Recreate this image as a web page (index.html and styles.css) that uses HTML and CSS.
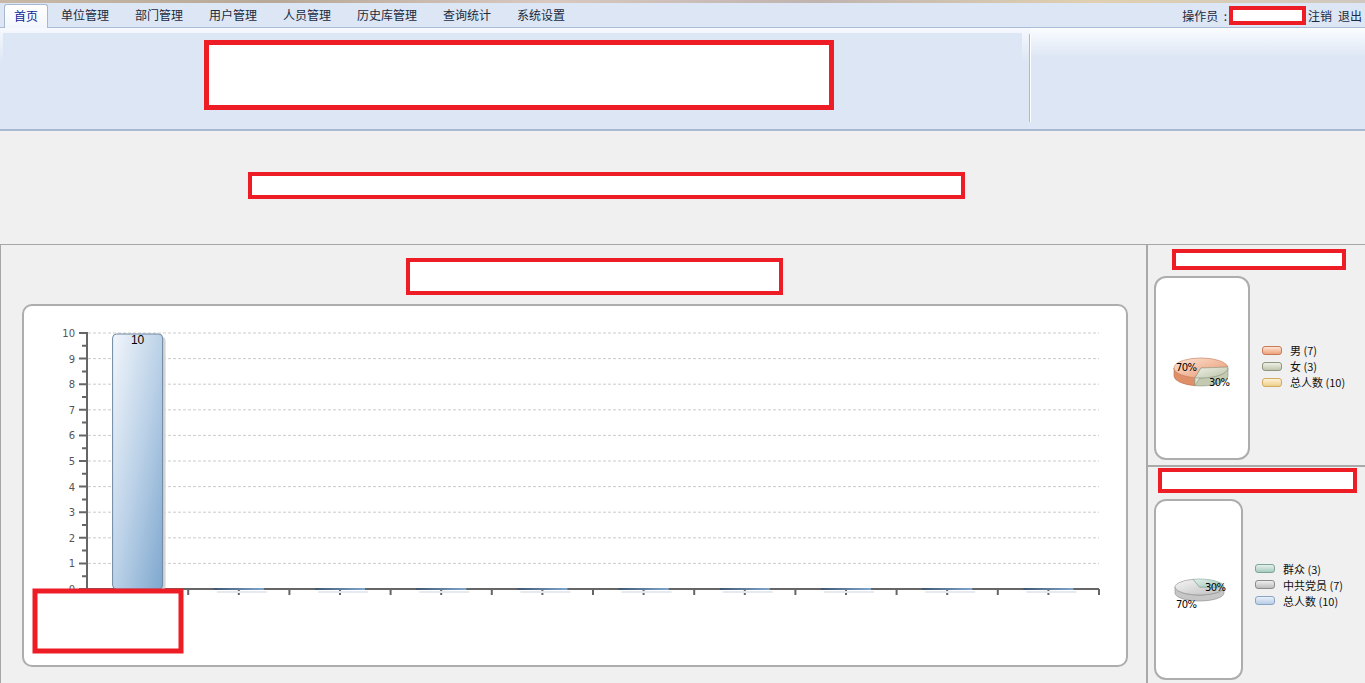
FILE: index.html
```html
<!DOCTYPE html>
<html lang="zh">
<head>
<meta charset="utf-8">
<title>首页</title>
<link rel="stylesheet" href="styles.css">
</head>
<body>
<div class="topstrip"></div>
<div class="menubar">
  <ul class="tabs">
    <li class="tab active">首页</li>
    <li class="tab">单位管理</li>
    <li class="tab">部门管理</li>
    <li class="tab">用户管理</li>
    <li class="tab">人员管理</li>
    <li class="tab">历史库管理</li>
    <li class="tab">查询统计</li>
    <li class="tab">系统设置</li>
  </ul>
  <div class="user">
    <span class="op">操作员&nbsp;&nbsp;:</span>
    <span class="redact redact-user"></span>
    <span class="link link-logout">注销</span>
    <span class="link link-exit">退出</span>
  </div>
</div>
<div class="banner">
  <div class="banner-left"><div class="redact redact-logo"></div></div>
  <div class="banner-sep"></div>
  <div class="banner-right"></div>
</div>
<div class="notice"><div class="redact redact-notice"></div></div>
<div class="main">
  <div class="left">
    <div class="redact redact-title"></div>
    <div class="chartbox">
      <svg class="chart" width="1105" height="362" viewBox="0 0 1105 362" xmlns="http://www.w3.org/2000/svg">
        <defs>
          <linearGradient id="barg" x1="0" y1="0" x2="1" y2="1">
            <stop offset="0" stop-color="#f2f6fb"/>
            <stop offset="0.5" stop-color="#bcd2e8"/>
            <stop offset="1" stop-color="#7ea7ce"/>
          </linearGradient>
          <linearGradient id="flatg" x1="0" y1="0" x2="1" y2="0">
            <stop offset="0" stop-color="#3f5770"/>
            <stop offset="1" stop-color="#7fa6cf"/>
          </linearGradient>
        </defs>
        <g id="grid" stroke="#cccccc" stroke-width="1" stroke-dasharray="3,2"></g>
        <g id="yaxis"></g>
        <g id="xaxis"></g>
        <g id="bars"></g>
        <rect x="12" y="287" width="146" height="60" fill="#ffffff" stroke="#ee1c24" stroke-width="5"/>
      </svg>
    </div>
  </div>
  <div class="right">
    <div class="sect sect1">
      <div class="redact redact-r1"></div>
      <div class="pierow">
        <div class="piebox pb1">
          <svg width="96" height="184" viewBox="0 0 96 184" xmlns="http://www.w3.org/2000/svg">
            <defs>
              <linearGradient id="or" x1="0" y1="0" x2="1" y2="1">
                <stop offset="0" stop-color="#fde6d8"/>
                <stop offset="1" stop-color="#e8946a"/>
              </linearGradient>
              <linearGradient id="gr" x1="0" y1="0" x2="1" y2="1">
                <stop offset="0" stop-color="#eef0e6"/>
                <stop offset="1" stop-color="#bcc3a8"/>
              </linearGradient>
            </defs>
            <path d="M40.9,101.7 A27,10 0 0,1 20,92 L20,100 A27,10 0 0,0 40.9,109.7 Z" fill="#e09068" stroke="#b87050" stroke-width="0.6"/>
            <path d="M74,92 A27,10 0 0,1 40.9,101.7 L40.9,109.7 A27,10 0 0,0 74,100 Z" fill="#c4cab2" stroke="#8e9680" stroke-width="0.6"/>
            <path d="M47,92 L40.9,101.7 L40.9,109.7 L47,100 Z" fill="#dde2cf" stroke="#8e9680" stroke-width="0.6"/>
            <path d="M47,92 L73.9,91.1 A27,10 0 1,0 40.9,101.7 Z" fill="url(#or)" stroke="#c07a56" stroke-width="0.6"/>
            <path d="M47,92 L73.9,91.1 A27,10 0 0,1 40.9,101.7 Z" fill="url(#gr)" stroke="#8e9680" stroke-width="0.6"/>
            <text x="22" y="95" class="pct">70%</text>
            <text x="55" y="110" class="pct">30%</text>
          </svg>
        </div>
        <ul class="legend lg1">
          <li><span class="sw sw-or"></span>男 (7)</li>
          <li><span class="sw sw-gr"></span>女 (3)</li>
          <li><span class="sw sw-ye"></span>总人数 (10)</li>
        </ul>
      </div>
    </div>
    <div class="sect sect2">
      <div class="redact redact-r2"></div>
      <div class="pierow">
        <div class="piebox pb2">
          <svg width="89" height="181" viewBox="0 0 89 181" xmlns="http://www.w3.org/2000/svg">
            <defs>
              <linearGradient id="gy" x1="0" y1="0" x2="1" y2="1">
                <stop offset="0" stop-color="#f6f6f6"/>
                <stop offset="1" stop-color="#bdbdbd"/>
              </linearGradient>
              <linearGradient id="tl" x1="0" y1="0" x2="1" y2="1">
                <stop offset="0" stop-color="#e4f0ec"/>
                <stop offset="1" stop-color="#9cc4b6"/>
              </linearGradient>
            </defs>
            <path d="M70,88 A24.5,8 0 0,1 21,88 L21,94 A24.5,8 0 0,0 70,94 Z" fill="#c6c6c6" stroke="#8c8c8c" stroke-width="0.6"/>
            <path d="M45.5,88 L70,88.4 A24.5,8 0 1,1 39.2,80.3 Z" fill="url(#gy)" stroke="#8c8c8c" stroke-width="0.6"/>
            <path d="M45.5,88 L39.2,80.3 A24.5,8 0 0,1 70,88.4 Z" fill="url(#tl)" stroke="#7fa898" stroke-width="0.6"/>
            <text x="51" y="92" class="pct">30%</text>
            <text x="22" y="109" class="pct">70%</text>
          </svg>
        </div>
        <ul class="legend lg2">
          <li><span class="sw sw-tl"></span>群众 (3)</li>
          <li><span class="sw sw-gy"></span>中共党员 (7)</li>
          <li><span class="sw sw-bl"></span>总人数 (10)</li>
        </ul>
      </div>
    </div>
  </div>
</div>
<script src="chart.js"></script>
</body>
</html>
```

FILE: chart.js
```js
(function () {
  var NS = "http://www.w3.org/2000/svg";
  function el(name, attrs, parent, text) {
    var e = document.createElementNS(NS, name);
    for (var k in attrs) e.setAttribute(k, attrs[k]);
    if (text !== undefined) e.textContent = text;
    parent.appendChild(e);
    return e;
  }
  var ax = 64, top = 29, bot = 285, right = 1076;
  var step = (bot - top) / 10;
  var grid = document.getElementById("grid");
  var yaxis = document.getElementById("yaxis");
  var bars = document.getElementById("bars");
  var xaxis = document.getElementById("xaxis");
  for (var i = 0; i <= 10; i++) {
    var y = bot - i * step;
    if (i > 0) el("line", { x1: ax + 1, y1: y, x2: right, y2: y }, grid);
    el("line", { x1: ax - 8, y1: y, x2: ax, y2: y, stroke: "#666", "stroke-width": 2 }, yaxis);
    if (i < 10) {
      var ym = y - step / 2;
      el("line", { x1: ax - 5, y1: ym, x2: ax, y2: ym, stroke: "#666", "stroke-width": 2 }, yaxis);
    }
    el("text", { x: 52, y: y + 4, "class": "ylab", "text-anchor": "end" }, yaxis, String(i));
  }
  el("line", { x1: ax, y1: top - 1, x2: ax, y2: bot + 1, stroke: "#666", "stroke-width": 2 }, yaxis);
  var tw = (right - ax) / 20;
  el("line", { x1: ax, y1: bot, x2: right, y2: bot, stroke: "#666", "stroke-width": 2 }, xaxis);
  for (var t = 1; t <= 20; t++) {
    var x = ax + t * tw;
    el("line", { x1: x, y1: bot, x2: x, y2: bot + 6, stroke: "#666", "stroke-width": 2 }, xaxis);
  }
  for (var c = 0; c < 10; c++) {
    var cx = ax + (2 * c + 1) * tw;
    if (c === 0) {
      el("rect", { x: cx - 22, y: top + 4, width: 50, height: bot - top - 3, rx: 4, fill: "#d4d4d4" }, bars);
      el("rect", { x: cx - 25, y: top + 1, width: 50, height: bot - top - 1, rx: 4, fill: "url(#barg)", stroke: "#6e87a3", "stroke-width": 1 }, bars);
      el("text", { x: cx, y: top + 11, "class": "blab", "text-anchor": "middle" }, bars, "10");
    } else {
      el("rect", { x: cx - 22, y: bot + 2, width: 50, height: 2, fill: "#e6e9ee" }, bars);
      el("rect", { x: cx - 25, y: bot - 1, width: 50, height: 2, fill: "url(#flatg)" }, bars);
    }
  }
})();
```

FILE: styles.css
```css
* { box-sizing: border-box; }
html, body { margin: 0; padding: 0; }
body {
  width: 1365px;
  height: 683px;
  overflow: hidden;
  background: #f0f0f0;
  font-family: "Noto Sans CJK SC", "Liberation Sans", sans-serif;
  font-size: 12px;
  color: #1a2a40;
}
ul { list-style: none; margin: 0; padding: 0; }

.redact {
  background: #ffffff;
  border: 5px solid #ee1c24;
}

.topstrip {
  height: 3px;
  background: linear-gradient(90deg, #c8b8a8, #b8a898 20%, #d8c8c0 40%, #c0b4b0 60%, #e0d0b0 80%, #d0c8c0);
}

.menubar {
  height: 25px;
  display: flex;
  justify-content: space-between;
  align-items: stretch;
  background: #dce6f4;
  border-bottom: 1px solid #aabcd6;
}
.tabs {
  display: flex;
  align-items: flex-end;
  padding-left: 4px;
}
.tab {
  height: 23px;
  line-height: 22px;
  padding: 0 13px;
  color: #1a2a40;
  white-space: nowrap;
}
.tab.active {
  background: linear-gradient(#ffffff, #f2f6fc);
  border: 1px solid #a8b8d0;
  border-bottom: none;
  border-radius: 3px 3px 0 0;
  color: #0f1f9a;
  padding: 0 9px;
  margin-right: 0;
  height: 24px;
  margin-bottom: -1px;
}
.user {
  display: flex;
  align-items: center;
  padding-right: 3px;
  white-space: nowrap;
}
.op { margin-right: 2px; }
.redact-user {
  width: 77px;
  height: 19px;
  border-width: 4px;
  margin-right: 2px;
}
.link-logout { margin-left: 0; }
.link-exit { margin-left: 6px; }

.banner {
  height: 103px;
  display: flex;
  background: linear-gradient(#f6f9fe, #dce6f4 35%);
  border-bottom: 2px solid #a9b9d2;
}
.banner-left {
  width: 1019px;
  height: 89px;
  margin: 5px 0 0 3px;
  background: #dce6f4;
  padding: 7px 0 0 201px;
}
.redact-logo {
  width: 630px;
  height: 70px;
  border-width: 5px;
}
.banner-sep {
  width: 2px;
  height: 88px;
  margin: 6px 0 0 7px;
  border-left: 1px solid #aeb9ca;
  border-right: 1px solid #ffffff;
}
.banner-right {
  flex: 1;
  background: linear-gradient(#fbfdff, #dce6f4 30px);
}

.notice {
  height: 113px;
  padding: 41px 0 0 248px;
}
.redact-notice {
  width: 717px;
  height: 27px;
  border-width: 4px;
}

.main {
  display: flex;
  height: 440px;
  border-top: 1px solid #a6a6a6;
}
.left {
  width: 1146px;
  border-left: 1px solid #a6a6a6;
  padding-top: 13px;
}
.redact-title {
  width: 377px;
  height: 37px;
  margin-left: 405px;
  border-width: 4px;
}
.chartbox {
  width: 1106px;
  height: 363px;
  margin: 9px 0 0 21px;
  background: #ffffff;
  border: 2px solid #adadad;
  border-radius: 10px;
  overflow: hidden;
}
.chart { display: block; margin: -2px 0 0 -1px; }
.ylab {
  font-family: "DejaVu Sans", "Liberation Sans", sans-serif;
  font-size: 10px;
  fill: #555555;
}
.blab {
  font-family: "Liberation Sans", sans-serif;
  font-size: 12px;
  fill: #000000;
}
.pct {
  font-family: "DejaVu Sans", "Liberation Sans", sans-serif;
  font-size: 10px;
  letter-spacing: -0.6px;
  fill: #000000;
}

.right {
  flex: 1;
  border-left: 2px solid #a9a9a9;
}
.sect1 {
  height: 222px;
  border-bottom: 2px solid #a9a9a9;
  padding-top: 4px;
}
.redact-r1 {
  width: 174px;
  height: 21px;
  margin-left: 24px;
  border-width: 4px;
}
.pierow {
  display: flex;
  align-items: center;
}
.piebox {
  background: #ffffff;
  border: 2px solid #adadad;
  border-radius: 12px;
  overflow: hidden;
  margin-left: 6px;
}
.piebox svg { display: block; margin: -2px 0 0 -2px; }
.pb1 { width: 96px; height: 184px; margin-top: 6px; }
.pb2 { width: 89px; height: 181px; margin-top: 6px; }
.legend {
  font-size: 11px;
  line-height: 16px;
  color: #111;
}
.legend li {
  display: flex;
  align-items: center;
  white-space: nowrap;
}
.lg1 { margin-left: 12px; margin-top: 2px; }
.lg2 { margin-left: 12px; margin-top: -4px; }
.sw {
  display: inline-block;
  width: 20px;
  height: 9px;
  border-radius: 3px;
  margin-right: 8px;
  border: 1px solid;
}
.sw-or { background: linear-gradient(#fde3d2, #eea27c); border-color: #c47c58; }
.sw-gr { background: linear-gradient(#eef0e6, #c0c6ae); border-color: #8e967e; }
.sw-ye { background: linear-gradient(#fdf1d6, #f0cf8a); border-color: #d0aa62; }
.sw-tl { background: linear-gradient(#e4f0ec, #a8ccbe); border-color: #7ea696; }
.sw-gy { background: linear-gradient(#eeeeee, #bdbdbd); border-color: #8c8c8c; }
.sw-bl { background: linear-gradient(#e8f0fa, #b8cde6); border-color: #8aa4c4; }

.sect2 {
  padding-top: 1px;
}
.redact-r2 {
  width: 199px;
  height: 25px;
  margin-left: 10px;
  border-width: 4px;
}
```
